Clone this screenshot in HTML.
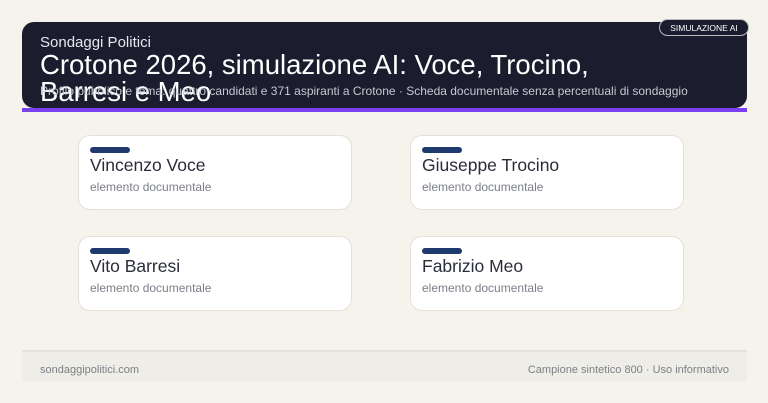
<!DOCTYPE html>
<html><head><meta charset="utf-8"><style>
*{margin:0;padding:0;box-sizing:border-box}
body{width:768px;height:403px;background:#f6f2ec;font-family:"Liberation Sans",sans-serif;position:relative;overflow:hidden}
.hdr{position:absolute;left:22px;top:22px;width:725px;height:86px;background:#1b1c2e;border-radius:12px;color:#fff;overflow:visible}
.bar{position:absolute;left:22px;top:108px;width:725px;height:4px;background:#7a3ff0}
.k{position:absolute;left:18px;top:12px;font-size:15px;color:#e8e8ee}
.t{position:absolute;left:18px;top:29px;font-size:27.5px;line-height:27px;width:620px;color:#fff}
.s{position:absolute;left:18px;top:62px;font-size:12px;color:#c8c8d2;white-space:nowrap}
.badge{position:absolute;left:659px;top:19px;width:90px;height:17px;border:1px solid #bbb;border-radius:9px;font-size:8.5px;color:#fff;text-align:center;line-height:16px;background:#1b1c2e}
.c{position:absolute;width:274px;height:75px;background:#fff;border:1px solid #e6e0d8;border-radius:12px}
.c i{position:absolute;left:11px;top:11px;width:40px;height:6px;border-radius:3px;background:#1f3a6e}
.c b{position:absolute;left:11px;top:19px;font-weight:normal;font-size:17.5px;color:#2a2d3a}
.c span{position:absolute;left:11px;top:44px;font-size:12px;color:#7b7f88}
.f{position:absolute;left:22px;top:350px;width:725px;height:32px;background:#efede8;border-top:2px solid #e6e2da;font-size:11px;color:#7d7f85}
.f .a{position:absolute;left:18px;top:12px}
.f .b{position:absolute;right:18px;top:12px}
</style></head><body>
<div class="hdr">
<div class="k">Sondaggi Politici</div>
<div class="t">Crotone 2026, simulazione AI: Voce, Trocino, Barresi e Meo</div>
<div class="s">Profilo pubblico e tema: quattro candidati e 371 aspiranti a Crotone · Scheda documentale senza percentuali di sondaggio</div>
</div>
<div class="badge">SIMULAZIONE AI</div>
<div class="bar"></div>
<div class="c" style="left:78px;top:135px"><i></i><b>Vincenzo Voce</b><span>elemento documentale</span></div>
<div class="c" style="left:410px;top:135px"><i></i><b>Giuseppe Trocino</b><span>elemento documentale</span></div>
<div class="c" style="left:78px;top:236px"><i></i><b>Vito Barresi</b><span>elemento documentale</span></div>
<div class="c" style="left:410px;top:236px"><i></i><b>Fabrizio Meo</b><span>elemento documentale</span></div>
<div class="f"><span class="a">sondaggipolitici.com</span><span class="b">Campione sintetico 800 · Uso informativo</span></div>
</body></html>
